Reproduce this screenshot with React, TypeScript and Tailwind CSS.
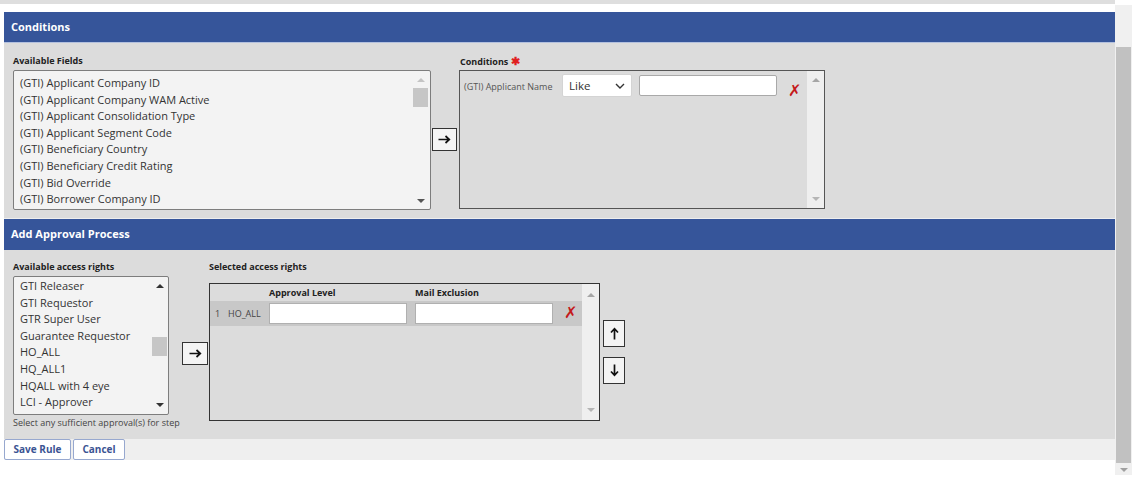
import React from "react";

const fields = [
  "(GTI) Applicant Company ID",
  "(GTI) Applicant Company WAM Active",
  "(GTI) Applicant Consolidation Type",
  "(GTI) Applicant Segment Code",
  "(GTI) Beneficiary Country",
  "(GTI) Beneficiary Credit Rating",
  "(GTI) Bid Override",
  "(GTI) Borrower Company ID",
];

const rights = [
  "GTI Releaser",
  "GTI Requestor",
  "GTR Super User",
  "Guarantee Requestor",
  "HO_ALL",
  "HQ_ALL1",
  "HQALL with 4 eye",
  "LCI - Approver",
];

const Up = ({ c = "#a6a6a6" }: { c?: string }) => (
  <div className="w-0 h-0 border-x-[4px] border-x-transparent border-b-[4px]" style={{ borderBottomColor: c }} />
);
const Down = ({ c = "#a6a6a6" }: { c?: string }) => (
  <div className="w-0 h-0 border-x-[4px] border-x-transparent border-t-[4px]" style={{ borderTopColor: c }} />
);

const Label = ({ children }: any) => (
  <div className="h-[12px] leading-[12px] text-[9px] font-bold text-[#222] whitespace-nowrap">{children}</div>
);

// arrow drawn pointing right, rotated for up/down
const ArrowBtn = ({ rot = 0, cls }: any) => (
  <div className={`${cls} flex items-center justify-center border border-[#333] bg-[#f4f4f4]`}>
    <svg width="13" height="9" viewBox="0 0 13 9" style={{ transform: `rotate(${rot}deg)` }}>
      <path d="M0.5 4.5H11M7.5 1L11.3 4.5L7.5 8" fill="none" stroke="#111" strokeWidth="1.7" />
    </svg>
  </div>
);

const RedX = () => <span className="text-[#c41a1a] text-[16px] leading-none font-['DejaVu_Sans',sans-serif]">✗</span>;

export default function App() {
  return (
    <div className="w-[1137px] h-[481px] bg-white flex font-['Open_Sans',sans-serif] overflow-hidden">
      <div className="w-[1115px] flex flex-col">
        <div className="h-[4px] bg-[#dedede]" />
        <div className="h-[8px]" />
        <div className="ml-[4px] flex flex-col">
          {/* Conditions */}
          <div className="h-[30px] bg-[#36559a] flex items-center pl-[7px] text-white text-[11px] font-bold">Conditions</div>
          <div className="h-[1px] bg-[#b4c1de]" />
          <div className="bg-[#dcdcdc] pt-[12px] pb-[8px] pl-[9px] flex">
            <div className="flex flex-col">
              <Label>Available Fields</Label>
              <div className="mt-[3px] w-[418px] h-[140px] border border-[#7d7d7d] rounded-[2px] bg-[#f3f3f3] flex">
                <div className="flex-1 pl-[6px] pt-[4px] text-[11px] text-[#333]">
                  {fields.map((f) => (
                    <div key={f} className="h-[16.6px] leading-[16.6px] whitespace-nowrap">{f}</div>
                  ))}
                </div>
                <div className="w-[15px] mr-[2px] flex flex-col items-center pt-[7px]">
                  <Up c="#c4c4c4" />
                  <div className="mt-[6px] w-[15px] h-[19px] bg-[#c6c6c6]" />
                  <div className="flex-1" />
                  <div className="mb-[6px]"><Down c="#555" /></div>
                </div>
              </div>
            </div>
            <div className="flex flex-col">
              <div className="pl-[29px]">
                <Label>
                  Conditions <span className="text-[#e02020] text-[11px]">✱</span>
                </Label>
              </div>
              <div className="mt-[3px] flex items-center">
                <ArrowBtn cls="ml-[1px] w-[25px] h-[23px]" />
                <div className="ml-[2px] w-[366px] h-[139px] border border-[#555] bg-[#dcdcdc] flex">
                  <div className="flex-1 flex items-start pt-[3px] pl-[4px]">
                    <div className="text-[9px] text-[#555] mt-[6px] w-[98px] whitespace-nowrap">(GTI) Applicant Name</div>
                    <div className="w-[70px] h-[23px] bg-white border border-[#d4d4d4] rounded-[2px] flex items-center justify-between px-[6px] text-[11.5px] text-[#333]">
                      <span>Like</span>
                      <svg width="10" height="6" viewBox="0 0 10 6"><path d="M1 1l4 4 4-4" fill="none" stroke="#333" strokeWidth="1.4" /></svg>
                    </div>
                    <div className="ml-[7px] mt-[1px] w-[138px] h-[21px] bg-white border border-[#a9a9a9] rounded-[2px]" />
                    <div className="ml-[11px] mt-[4px]"><RedX /></div>
                  </div>
                  <div className="w-[17px] bg-[#efefef] flex flex-col items-center pt-[7px] pb-[7px] justify-between">
                    <Up />
                    <Down c="#b5b5b5" />
                  </div>
                </div>
              </div>
            </div>
          </div>
          <div className="h-[1px] bg-[#eeeeee]" />
          {/* Add Approval Process */}
          <div className="h-[31px] bg-[#36559a] flex items-center pl-[7px] text-white text-[11px] font-bold">Add Approval Process</div>
          <div className="bg-[#dcdcdc] pt-[11px] pb-[10px] pl-[9px] flex">
            <div className="w-[156px] flex flex-col">
              <Label>Available access rights</Label>
              <div className="mt-[3px] w-[156px] h-[139px] border border-[#7d7d7d] rounded-[2px] bg-[#f3f3f3] flex overflow-hidden">
                <div className="flex-1 pl-[6px] pt-[1px] text-[11px] text-[#333]">
                  {rights.map((f) => (
                    <div key={f} className="h-[16.6px] leading-[16.6px] whitespace-nowrap">{f}</div>
                  ))}
                </div>
                <div className="w-[15px] mr-[1px] flex flex-col items-center pt-[7px]">
                  <Up c="#333" />
                  <div className="mt-[49px] w-[15px] h-[19px] bg-[#c6c6c6]" />
                  <div className="flex-1" />
                  <div className="mb-[7px]"><Down c="#333" /></div>
                </div>
              </div>
              <div className="h-[13px] leading-[13px] mt-[1px] text-[9px] text-[#444] whitespace-nowrap">Select any sufficient approval(s) for step</div>
            </div>
            <div className="flex flex-col">
              <div className="pl-[40px]">
                <Label>Selected access rights</Label>
              </div>
              <div className="mt-[10px] flex items-center">
                <ArrowBtn cls="ml-[13px] w-[26px] h-[23px] mt-[2px]" />
                <div className="ml-[1px] w-[391px] h-[138px] border border-[#333] bg-[#dcdcdc] flex">
                  <div className="flex-1 flex flex-col">
                    <div className="h-[17px] flex items-center text-[9px] font-bold text-[#222]">
                      <span className="ml-[59px] w-[146px]">Approval Level</span>
                      <span>Mail Exclusion</span>
                    </div>
                    <div className="h-[25px] bg-[#c8c8c8] flex items-center text-[9px] text-[#444]">
                      <span className="ml-[5px] w-[13px]">1</span>
                      <span className="w-[41px]">HO_ALL</span>
                      <div className="w-[138px] h-[21px] bg-white border border-[#b0b0b0]" />
                      <div className="ml-[8px] w-[138px] h-[21px] bg-white border border-[#b0b0b0]" />
                      <div className="ml-[11px]"><RedX /></div>
                    </div>
                  </div>
                  <div className="w-[17px] bg-[#efefef] flex flex-col items-center pt-[9px] pb-[8px] justify-between">
                    <Up />
                    <Down c="#b5b5b5" />
                  </div>
                </div>
                <div className="ml-[3px] mt-[-1px] flex flex-col gap-[10px]">
                  <ArrowBtn rot={-90} cls="w-[22px] h-[27px]" />
                  <ArrowBtn rot={90} cls="w-[22px] h-[27px]" />
                </div>
              </div>
            </div>
          </div>
          <div className="h-[21px] bg-[#efefef] flex gap-[2px]">
            <div className="w-[67px] h-[21px] bg-white border border-[#97a8cf] rounded-[2px] flex items-center justify-center text-[10px] font-bold text-[#3b5493]">Save Rule</div>
            <div className="w-[52px] h-[21px] bg-white border border-[#97a8cf] rounded-[2px] flex items-center justify-center text-[10px] font-bold text-[#3b5493]">Cancel</div>
          </div>
        </div>
      </div>
      <div className="w-[17px] mt-[5px] h-[470px] flex flex-col items-center bg-[#f0f0f0]">
        <div className="h-[42px]" />
        <div className="w-[15px] h-[416px] bg-[#c1c1c1]" />
        <div className="mt-[5px]"><Down c="#a0a0a0" /></div>
      </div>
    </div>
  );
}
